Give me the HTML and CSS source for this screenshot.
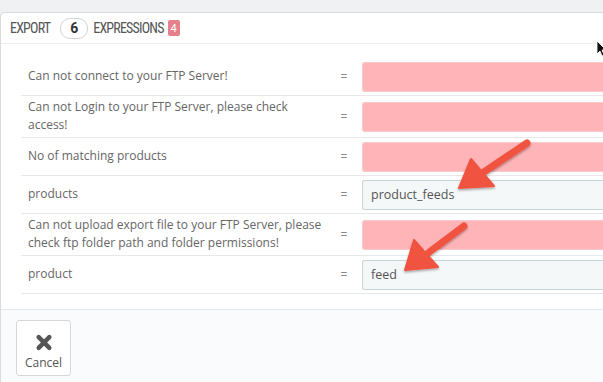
FILE: index.html
```html
<!DOCTYPE html>
<html lang="en">
<head>
<meta charset="UTF-8">
<title>Export expressions</title>
<link rel="stylesheet" href="styles.css">
</head>
<body>

<div class="panel">
    <div class="panel-heading">
        <span class="heading-word">EXPORT</span>
        <span class="badge-outline">6</span>
        <span class="heading-word">EXPRESSIONS</span>
        <span class="badge-red">4</span>
    </div>

    <div class="panel-body">
        <table class="expr-table">
            <tr>
                <td class="label">Can not connect to your FTP Server!</td>
                <td class="eq">=</td>
                <td class="value"><div class="field empty"></div></td>
            </tr>
            <tr>
                <td class="label">Can not Login to your FTP Server, please check access!</td>
                <td class="eq">=</td>
                <td class="value"><div class="field empty"></div></td>
            </tr>
            <tr>
                <td class="label">No of matching products</td>
                <td class="eq">=</td>
                <td class="value"><div class="field empty"></div></td>
            </tr>
            <tr>
                <td class="label">products</td>
                <td class="eq">=</td>
                <td class="value"><div class="field">product_feeds</div></td>
            </tr>
            <tr>
                <td class="label">Can not upload export file to your FTP Server, please check ftp folder path and folder permissions!</td>
                <td class="eq">=</td>
                <td class="value"><div class="field empty"></div></td>
            </tr>
            <tr>
                <td class="label">product</td>
                <td class="eq">=</td>
                <td class="value"><div class="field">feed</div></td>
            </tr>
        </table>
    </div>

    <div class="panel-footer">
        <button class="btn-cancel">
            <svg class="icon-x" viewBox="0 0 16 16" width="18" height="17">
                <path d="M3 3 L13 13 M13 3 L3 13" stroke="#555" stroke-width="4.2" stroke-linecap="round"/>
            </svg>
            <span>Cancel</span>
        </button>
    </div>
</div>

<!-- annotation arrows drawn over the screenshot -->
<svg class="annotations" width="603" height="382" viewBox="0 0 603 382">
    <defs>
        <filter id="shadow" x="-20%" y="-20%" width="140%" height="140%">
            <feDropShadow dx="0" dy="1.5" stdDeviation="1.2" flood-color="#000" flood-opacity="0.35"/>
        </filter>
    </defs>
    <g filter="url(#shadow)" fill="#f0533f" stroke="#f0533f" stroke-linejoin="round">
        <line x1="527" y1="143" x2="478" y2="176" stroke-width="7" stroke-linecap="round"/>
        <polygon points="459,188 471,159 494,186" stroke-width="2"/>
        <line x1="464" y1="226" x2="420" y2="259" stroke-width="7" stroke-linecap="round"/>
        <polygon points="405,270 414,240 438,267" stroke-width="2"/>
    </g>
    <path d="M597 41 L597 54 L600 51 L602 56 L604 55 L602 50 L606 50 Z" fill="#111" stroke="#fff" stroke-width="0.8"/>
</svg>

</body>
</html>
```

FILE: styles.css
```css
body {
    margin: 0;
    padding-top: 12px;
    background-color: #eff1f3;
    font-family: "Open Sans", "Liberation Sans", sans-serif;
    color: #555;
    overflow: hidden;
    height: 370px;
    position: relative;
}
.panel {
    background-color: #ffffff;
    border: 1px solid #d9dcde;
    border-right: none;
    border-radius: 5px 0 0 0;
}
.panel-heading {
    display: flex;
    align-items: center;
    height: 30px;
    padding-left: 9px;
    border-bottom: 1px solid #eceeef;
}
.heading-word {
    font-family: "Liberation Sans Narrow", "Roboto", sans-serif;
    font-stretch: condensed;
    font-size: 14px;
    letter-spacing: -0.8px;
    color: #555;
}
.badge-outline {
    display: inline-flex;
    align-items: center;
    justify-content: center;
    width: 26px;
    height: 19px;
    margin: 0 5px 0 10px;
    border: 1px solid #cfd3d5;
    border-radius: 10px;
    font-family: "Liberation Sans Narrow", "Roboto", sans-serif;
    font-weight: bold;
    font-size: 14px;
    color: #333;
}
.badge-red {
    display: inline-flex;
    align-items: center;
    justify-content: center;
    width: 12px;
    height: 16px;
    margin-left: 4px;
    border-radius: 2px;
    background-color: #e6808b;
    color: #fff;
    font-family: "Liberation Sans Narrow", "Roboto", sans-serif;
    font-size: 11px;
}
.panel-body {
    padding: 14px 0 15px 20px;
}
.expr-table {
    border-collapse: collapse;
    width: 100%;
}
.expr-table tr {
    border-bottom: 1px solid #e6e9eb;
}
.expr-table td {
    padding: 0;
    vertical-align: middle;
}
.label {
    width: 295px;
    padding: 2px 7px 3px 7px !important;
    font-size: 12px;
    line-height: 18px;
    color: #666;
}
.eq {
    width: 28px;
    text-align: center;
    font-size: 12px;
    color: #888;
}
.value {
    padding: 4px 0 3px 4px !important;
}
.field {
    box-sizing: border-box;
    height: 30px;
    border: 1px solid #c7d6db;
    border-right: none;
    border-radius: 3px 0 0 3px;
    background-color: #f5f8f9;
    padding-left: 8px;
    font-size: 12.5px;
    line-height: 28px;
    color: #555;
}
.field.empty {
    background-color: #ffb4b8;
    border-color: #f7c9cc;
}
.panel-footer {
    border-top: 1px solid #e6e9eb;
    background-color: #fafbfc;
    padding: 10px 15px 8px 15px;
    height: 60px;
}
.btn-cancel {
    display: flex;
    flex-direction: column;
    align-items: center;
    justify-content: flex-end;
    box-sizing: border-box;
    width: 55px;
    height: 56px;
    padding: 0 0 4px 0;
    background-color: #ffffff;
    border: 1px solid #d5d8da;
    border-radius: 3px;
    font-family: "Open Sans", "Liberation Sans", sans-serif;
    font-size: 12px;
    color: #555;
}
.icon-x {
    margin-bottom: 3px;
}
.annotations {
    position: absolute;
    top: 0;
    left: 0;
    pointer-events: none;
}
```
